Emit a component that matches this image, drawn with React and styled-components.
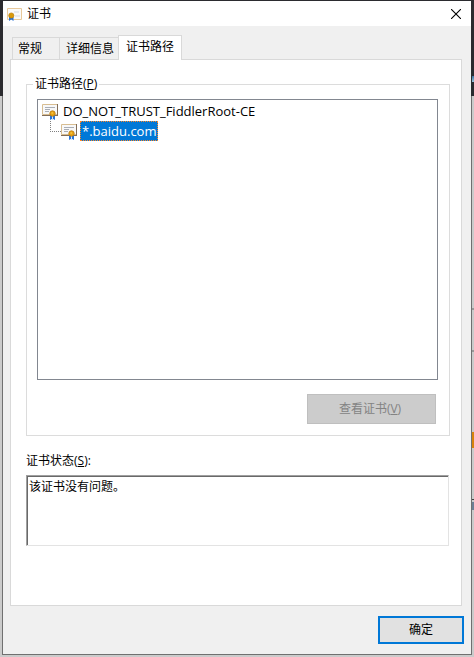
import React from "react";
import styled, { createGlobalStyle } from "styled-components";

const GlobalStyle = createGlobalStyle`
  * { box-sizing: border-box; }
  body {
    margin: 0;
    color: #000;
    font: 12px/16px "Open Sans", "Noto Sans CJK SC", sans-serif;
  }
  button, textarea { font: inherit; color: inherit; }
`;

const Desktop = styled.div`
  display: flex;
  min-height: 100vh;
  padding: 0 2px 2px;
  background:
    linear-gradient(#3b6f9c, #9cc4dc) right 76px / 2px 6px no-repeat,
    linear-gradient(#999, #999) right 308px / 2px 2px no-repeat,
    linear-gradient(#999, #999) right 350px / 2px 2px no-repeat,
    linear-gradient(#d8820c, #d8820c) right 432px / 2px 16px no-repeat,
    linear-gradient(#444, #444) right 499px / 2px 1px no-repeat,
    linear-gradient(#6d7f95, #6d7f95) right 502px / 2px 8px no-repeat,
    linear-gradient(#2b2b2f 96px, #cbcbcb 96px);
`;

const Dialog = styled.main`
  flex: 1;
  min-width: 0;
  display: flex;
  flex-direction: column;
  border: 1px solid #707070;
  border-image: linear-gradient(#2b2b2f 96px, #707070 96px) 1;
  background: #f0f0f0;
`;

const TitleBar = styled.header`
  display: flex;
  align-items: center;
  gap: 5px;
  height: 25px;
  padding-left: 4px;
  background: #fff;
`;

const Title = styled.h1`
  flex: 1;
  margin: 0;
  font: inherit;
`;

const CloseButton = styled.button`
  display: flex;
  align-items: center;
  justify-content: center;
  width: 30px;
  height: 25px;
  padding: 0;
  border: 0;
  background: none;
`;

const TabList = styled.div`
  display: flex;
  align-items: flex-end;
  margin: 9px 9px 0;
`;

const Tab = styled.button`
  height: 22px;
  padding: 0 ${(p) => (p.$wide ? 17 : 4)}px 0 ${(p) => (p.$wide ? 5 : 6)}px;
  border: solid #d9d9d9;
  border-width: 1px 0 0 1px;
  background: #f0f0f0;
  white-space: nowrap;

  &[aria-selected="true"] {
    z-index: 1;
    height: 25px;
    margin-bottom: -1px;
    padding: 0 7px 2px;
    border-right-width: 1px;
    background: #fff;
  }
`;

const Panel = styled.section`
  flex: 1;
  display: flex;
  flex-direction: column;
  margin: 0 9px 0 7px;
  padding: 16px 11px 59px 15px;
  border: 1px solid #d9d9d9;
  background: #fff;
`;

const Group = styled.fieldset`
  flex: 1;
  display: flex;
  flex-direction: column;
  min-width: 0;
  margin: 0;
  padding: 7px 11px 11px 10px;
  border: 1px solid #dcdcdc;
`;

const Legend = styled.legend`
  margin-left: -4px;
  padding: 0 2px;
`;

const Tree = styled.ul`
  flex: 1;
  margin: 0;
  padding: 1px 4px;
  border: 1px solid #828790;
  list-style: none;
`;

const TreeItem = styled.li`
  list-style: none;
`;

const Branch = styled.ul`
  margin: 0;
  padding: 0 0 0 8px;
`;

const Node = styled.div`
  display: flex;
  align-items: center;
  height: 20px;
  font-size: 13px;
  line-height: 18px;
`;

const Connector = styled.span`
  align-self: flex-start;
  width: 11px;
  height: 11px;
  border: dotted #808080;
  border-width: 0 0 1px 1px;
`;

const NodeLabel = styled.span`
  margin-left: 2px;
  padding: 0 1px;
  border: ${(p) => (p.$selected ? "1px dotted #ff8728" : "1px solid transparent")};
  background: ${(p) => (p.$selected ? "#0078d7" : "transparent")};
  color: ${(p) => (p.$selected ? "#fff" : "#000")};
  white-space: nowrap;
`;

const ViewButton = styled.button`
  align-self: flex-end;
  width: 129px;
  height: 30px;
  margin: 14px 2px 0 0;
  padding: 0 3px 0 0;
  border: 1px solid #bfbfbf;
  background: #ccc;
  color: #838383;
`;

const StatusLabel = styled.label`
  margin: 17px 0 6px;
`;

const Status = styled.textarea`
  display: block;
  height: 71px;
  margin-right: 1px;
  padding: 3px 2px;
  border: 1px solid;
  border-color: #a0a0a0 #e3e3e3 #e3e3e3 #a0a0a0;
  box-shadow: inset 1px 1px #696969;
  outline: 0;
  resize: none;
  background: #fff;
`;

const Footer = styled.footer`
  display: flex;
  justify-content: flex-end;
  padding: 10px 7px;
`;

const OkButton = styled.button`
  width: 86px;
  height: 28px;
  border: 2px solid #0078d7;
  background: #e1e1e1;
`;

function CertificateIcon() {
  return (
    <svg width="17" height="17" viewBox="0 0 17 17" aria-hidden="true">
      <path d="M.5 1.5h15v10H.5z" fill="#f8f8f8" stroke="#d8bd91" />
      <path d="M0 12.5h16M15.5 1v12" stroke="#806c58" />
      <path d="M3 4.5h10M3 6.5h5M3 8.5h4" stroke="#a9adb5" />
      <path d="M8 12v5l1.8-1h1.4l1.8 1v-5z" fill="#2874d8" />
      <path d="M10.5 13v4" stroke="#d5e6f8" />
      <circle cx="10.5" cy="10.5" r="2.7" fill="#e9a414" stroke="#b67812" strokeWidth=".8" />
      <path d="M9.5 10h1.5" stroke="#ffda65" />
    </svg>
  );
}

function TitleIcon() {
  return (
    <svg width="15" height="14" viewBox="0 0 15 14" aria-hidden="true">
      <path d="M.5 1.5h14v11H.5z" fill="#fafafa" stroke="#e8c99b" />
      <path d="M7 4h5v2H7zM8 8h5v2H8z" fill="#e6e9ee" />
      <path d="M2 10v4l2.2-1.5L6.5 14v-4z" fill="#2874d8" />
      <circle cx="4.3" cy="8.5" r="2.6" fill="#d99a0b" stroke="#b87b08" strokeWidth=".6" />
    </svg>
  );
}

export default function App() {
  return (
    <>
      <GlobalStyle />
      <Desktop>
        <Dialog>
          <TitleBar>
            <TitleIcon />
            <Title>证书</Title>
            <CloseButton type="button" aria-label="关闭">
              <svg width="10" height="10" viewBox="0 0 10 10" aria-hidden="true">
                <path d="M0 0l10 10M10 0L0 10" stroke="#000" strokeWidth="1.1" />
              </svg>
            </CloseButton>
          </TitleBar>

          <TabList role="tablist">
            <Tab type="button" role="tab" aria-selected="false" $wide>常规</Tab>
            <Tab type="button" role="tab" aria-selected="false">详细信息</Tab>
            <Tab type="button" role="tab" aria-selected="true" id="path-tab" aria-controls="path-panel">证书路径</Tab>
          </TabList>

          <Panel role="tabpanel" id="path-panel" aria-labelledby="path-tab">
            <Group>
              <Legend>证书路径(<u>P</u>)</Legend>
              <Tree role="tree" aria-label="证书路径">
                <TreeItem role="treeitem" aria-expanded="true">
                  <Node>
                    <CertificateIcon />
                    <NodeLabel>DO_NOT_TRUST_FiddlerRoot-CE</NodeLabel>
                  </Node>
                  <Branch role="group">
                    <TreeItem role="treeitem" aria-selected="true">
                      <Node>
                        <Connector />
                        <CertificateIcon />
                        <NodeLabel $selected>*.baidu.com</NodeLabel>
                      </Node>
                    </TreeItem>
                  </Branch>
                </TreeItem>
              </Tree>
              <ViewButton type="button" disabled>查看证书(<u>V</u>)</ViewButton>
            </Group>
            <StatusLabel htmlFor="status">证书状态(<u>S</u>):</StatusLabel>
            <Status id="status" readOnly value="该证书没有问题。" />
          </Panel>

          <Footer>
            <OkButton type="button">确定</OkButton>
          </Footer>
        </Dialog>
      </Desktop>
    </>
  );
}
